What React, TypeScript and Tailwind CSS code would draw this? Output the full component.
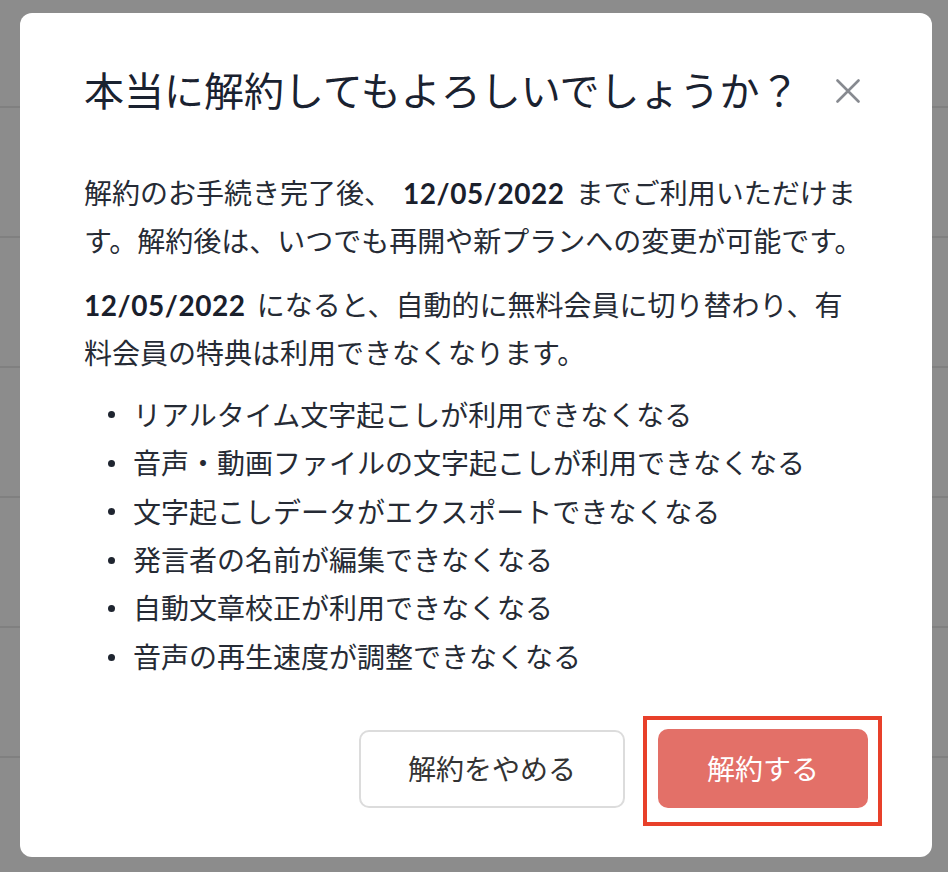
import React from "react";

const LOSSES = [
  "リアルタイム文字起こしが利用できなくなる",
  "音声・動画ファイルの文字起こしが利用できなくなる",
  "文字起こしデータがエクスポートできなくなる",
  "発言者の名前が編集できなくなる",
  "自動文章校正が利用できなくなる",
  "音声の再生速度が調整できなくなる",
];

const FONT = { fontFamily: '"Lato", "Noto Sans CJK JP", sans-serif' };

function CloseIcon() {
  return (
    <svg width="24" height="24" viewBox="0 0 24 24" fill="none">
      <path d="M1.5 1.5 L22.5 22.5 M22.5 1.5 L1.5 22.5" stroke="#878a90" strokeWidth="2.6" strokeLinecap="round" />
    </svg>
  );
}

function EndDate({ className = "" }: { className?: string }) {
  return <strong className={`font-bold tracking-[0.02em] text-[#1a202c] ${className}`}>12/05/2022</strong>;
}

export default function App() {
  return (
    <div className="relative h-[872px] w-full overflow-hidden bg-[#8c8c8c]" style={FONT}>
      {/* page rows behind the overlay */}
      <div className="flex flex-col">
        <div className="h-[108px] border-b-2 border-[#808080]" />
        {[0, 1, 2, 3, 4, 5].map((i) => (
          <div key={i} className="h-[130px] border-b-2 border-[#808080]" />
        ))}
      </div>

      <div className="absolute inset-0 flex items-center justify-center">
        <div className="w-[912px] rounded-[12px] bg-white px-[64px] pt-[48px] pb-[49px] ml-[4px] -mt-[2px]">
          <div className="flex items-center justify-between">
            <h2 className="text-[40px] leading-[60px] font-normal text-[#1a2230]">
              本当に解約してもよろしいでしょうか？
            </h2>
            <button className="flex h-[40px] w-[40px] items-center justify-center">
              <CloseIcon />
            </button>
          </div>

          <div className="mt-[48px] -mr-[2px] text-[28px] leading-[48px] text-[#262b35]">
            <p className="mb-[16px]">
              解約のお手続き完了後、<EndDate className="mx-[11px]" />までご利用いただけます。解約後は、いつでも再開や新プランへの変更が可能です。
            </p>
            <p className="mb-[14px]">
              <EndDate className="mr-[11px]" />になると、自動的に無料会員に切り替わり、有料会員の特典は利用できなくなります。
            </p>
            <ul>
              {LOSSES.map((t) => (
                <li key={t} className="flex items-center leading-[48.4px]">
                  <span className="ml-[24px] mr-[18px] h-[7px] w-[7px] shrink-0 rounded-full bg-[#1f2530]" />
                  {t}
                </li>
              ))}
            </ul>
          </div>

          <div className="mt-[48px] flex items-center justify-end gap-[33px]">
            <button className="h-[78px] rounded-[10px] border-2 border-[#dcdcdc] bg-white px-[47px] text-[28px] text-[#333333]">
              解約をやめる
            </button>
            <div className="relative">
              <button className="h-[79px] rounded-[10px] bg-[#e37068] px-[49px] text-[28px] text-white">
                解約する
              </button>
              <span className="pointer-events-none absolute -left-[15px] -right-[14px] -top-[13px] -bottom-[18px] border-[4px] border-[#e8402a]" />
            </div>
          </div>
        </div>
      </div>
    </div>
  );
}
